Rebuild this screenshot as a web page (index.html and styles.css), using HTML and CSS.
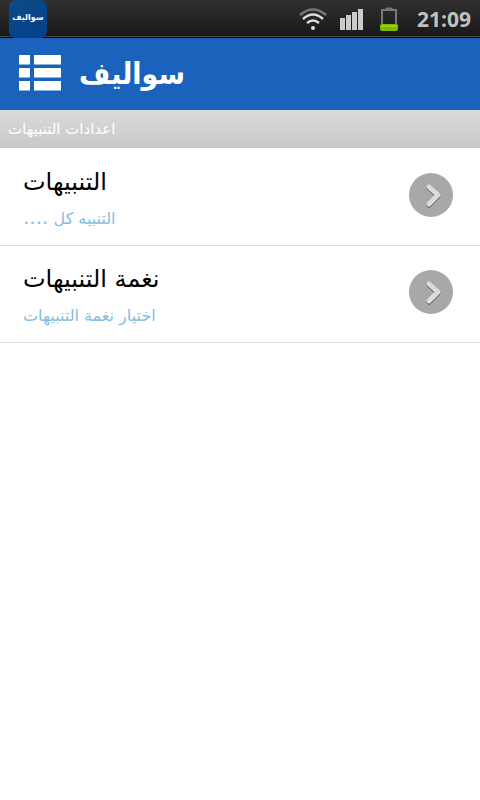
FILE: index.html
```html
<!DOCTYPE html>
<html lang="ar">
<head>
    <meta charset="UTF-8">
    <meta name="viewport" content="width=device-width, initial-scale=1.0">
    <title>سواليف</title>
    <link rel="stylesheet" href="styles.css">
</head>
<body>
    <div class="status-bar">
        <div class="app-icon" dir="rtl">سواليف</div>
        <div class="status-icons">
            <svg class="wifi" width="30" height="24" viewBox="0 0 30 24" fill="none" stroke-width="2.500">
                <path d="M2 8Q15-3 28 8" stroke="#777"/>
                <path d="M5 12Q15 3 25 12" stroke="#ddd"/>
                <path d="M9 16Q15 11 21 16" stroke="#ddd"/>
                <circle cx="15" cy="21" r="2" fill="#ddd"/>
            </svg>
            <svg class="signal" width="24" height="24" viewBox="0 0 24 24" fill="#ccc">
                <rect x="0" y="11" width="5" height="12"/>
                <rect x="6" y="8" width="5" height="15"/>
                <rect x="12" y="5" width="5" height="18"/>
                <rect x="18" y="2" width="5" height="21"/>
            </svg>
            <svg class="battery" width="20" height="26" viewBox="0 0 20 26">
                <path d="M7 3V2h6v1" fill="#777" stroke="#777"/>
                <rect x="3" y="4" width="14" height="19" fill="none" stroke="#777" stroke-width="2"/>
                <rect x="1" y="18" width="18" height="7" rx="2" fill="#7fb800"/>
                <rect x="2" y="19" width="16" height="2" fill="#9ad012"/>
            </svg>
        </div>
        <span class="clock">21:09</span>
    </div>

    <header class="header">
        <button class="menu-btn" aria-label="القائمة">
            <svg width="42" height="38" viewBox="0 0 42 38">
                <path d="M0 1h11v9H0zM15 1h27v9H15zM0 14h11v9H0zM15 14h27v9H15zM0 27h11v9H0zM15 27h27v9H15z" fill="#8fb2df"/>
                <path d="M0 0h11v9H0zM15 0h27v9H15zM0 13h11v9H0zM15 13h27v9H15zM0 26h11v9H0zM15 26h27v9H15z" fill="#fff"/>
            </svg>
        </button>
        <h1 class="logo" dir="rtl">سواليف</h1>
    </header>

    <h2 class="section-title" dir="rtl">اعدادات التنبيهات</h2>

    <main class="settings">
        <button class="setting">
            <span class="setting-text">
                <span class="setting-name" dir="rtl">التنبيهات</span>
                <span class="setting-info" dir="rtl">التنبيه كل <span class="dots">....</span></span>
            </span>
            <svg class="arrow" width="44" height="44" viewBox="0 0 44 44" fill="none" stroke-linecap="round" stroke-linejoin="round">
                <circle cx="22" cy="22" r="22" fill="#a9a8a9"/>
                <path d="M20 15L29 23L20 32" stroke="#555" stroke-width="5"/>
                <path d="M20 14L29 22L20 31" stroke="#dcdcdc" stroke-width="5"/>
            </svg>
        </button>
        <button class="setting">
            <span class="setting-text">
                <span class="setting-name" dir="rtl">نغمة التنبيهات</span>
                <span class="setting-info" dir="rtl">اختيار نغمة التنبيهات</span>
            </span>
            <svg class="arrow" width="44" height="44" viewBox="0 0 44 44" fill="none" stroke-linecap="round" stroke-linejoin="round">
                <circle cx="22" cy="22" r="22" fill="#a9a8a9"/>
                <path d="M20 15L29 23L20 32" stroke="#555" stroke-width="5"/>
                <path d="M20 14L29 22L20 31" stroke="#dcdcdc" stroke-width="5"/>
            </svg>
        </button>
    </main>
</body>
</html>
```

FILE: styles.css
```css
* {
    box-sizing: border-box;
}
body {
    margin: 0;
    background-color: #fff;
    font-family: "DejaVu Sans", sans-serif;
}
button {
    border: none;
    background: none;
    padding: 0;
    font-family: inherit;
    cursor: pointer;
}
.status-bar {
    display: flex;
    align-items: center;
    height: 38px;
    padding: 0 9px;
    background: linear-gradient(#303030, #181818);
    border-bottom: 1px solid #000;
    box-shadow: inset 0 -1px #4a4a4a;
}
.app-icon {
    width: 38px;
    height: 38px;
    border-radius: 7px;
    background: linear-gradient(160deg, #0d4a86, #04408c);
    color: #fff;
    font-size: 8px;
    font-weight: bold;
    line-height: 36px;
    text-align: center;
}
.status-icons {
    display: flex;
    align-items: center;
    gap: 12px;
    margin-left: auto;
}
.battery {
    margin-left: 3px;
}
.clock {
    margin-left: 18px;
    color: #c0c0c0;
    font-family: "Open Sans", sans-serif;
    font-size: 21px;
    font-weight: bold;
    line-height: 36px;
}
.header {
    display: flex;
    align-items: center;
    gap: 18px;
    height: 72px;
    padding: 0 19px;
    background-color: #1b62bd;
}
.menu-btn svg {
    display: block;
}
.logo {
    margin: 0;
    color: #fff;
    font-family: "DejaVu Sans Condensed", "DejaVu Sans", sans-serif;
    font-size: 30px;
    line-height: 40px;
}
.section-title {
    margin: 0;
    padding: 0 8px;
    background: linear-gradient(#dadada, #c8c8c8);
    color: #fff;
    font-size: 15px;
    font-weight: normal;
    line-height: 38px;
    text-align: left;
}
.settings {
    padding-top: 1px;
}
.setting {
    display: flex;
    align-items: flex-start;
    justify-content: space-between;
    width: 100%;
    padding: 15px 27px 7px 23px;
    border-bottom: 1px solid #dcdcdc;
}
.setting-text {
    display: flex;
    flex-direction: column;
    align-items: flex-start;
}
.setting-name {
    color: #000;
    font-size: 24px;
    line-height: 36px;
}
.setting-info {
    color: #86bce2;
    font-size: 16px;
    line-height: 38px;
}
.dots {
    font-size: 20px;
    line-height: 20px;
}
.arrow {
    margin-top: 9px;
}
```
